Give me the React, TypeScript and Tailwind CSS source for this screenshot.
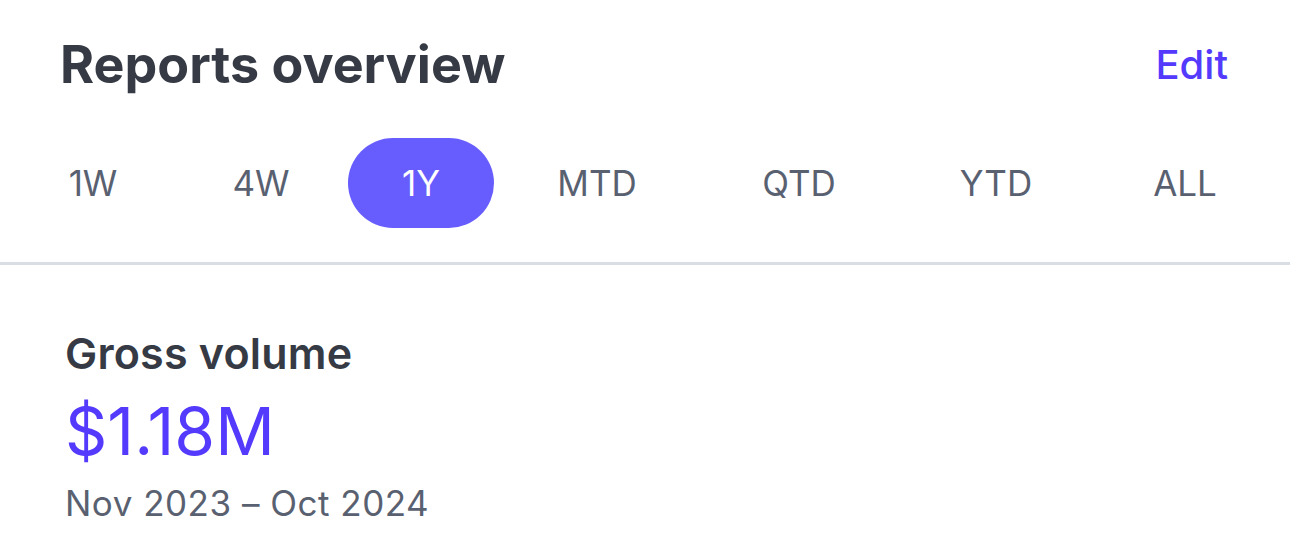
import React from 'react';

const ranges = ['1W', '4W', '1Y', 'MTD', 'QTD', 'YTD', 'ALL'];

export default function App() {
  const active = '1Y';
  return (
    <div className="min-h-screen w-full bg-white font-['Inter',sans-serif] antialiased">
      <div className="flex items-center justify-between pl-[60px] pr-[62px] pt-[30px]">
        <h1 className="text-[52px] font-bold leading-[70px] text-[#353a44]">Reports overview</h1>
        <button className="text-[40px] font-medium leading-[70px] text-[#533afd]">Edit</button>
      </div>

      <div className="mt-[38px] grid grid-cols-[168px_168px_152px_200px_204px_190px_188px] pl-[9px]">
        {ranges.map((r) => (
          <div key={r} className="flex justify-center">
            <button
              className={
                r === active
                  ? 'h-[90px] w-[146px] rounded-full bg-[#675dff] text-[35px] text-white'
                  : 'h-[90px] text-[35px] text-[#596171]'
              }
            >
              {r}
            </button>
          </div>
        ))}
      </div>

      <div className="mt-[34px] h-[3px] w-full bg-[#d8dee4]" />

      <div className="pl-[65px] pt-[64px]">
        <div className="text-[43px] font-semibold leading-[48px] tracking-[0.2px] text-[#353a44]">Gross volume</div>
        <div className="mt-[18px] text-[66px] leading-[72px] text-[#533afd]">$1.18M</div>
        <div className="mt-[16px] text-[35px] leading-[40px] tracking-[0.5px] text-[#596171]">Nov 2023 – Oct 2024</div>
      </div>
    </div>
  );
}
